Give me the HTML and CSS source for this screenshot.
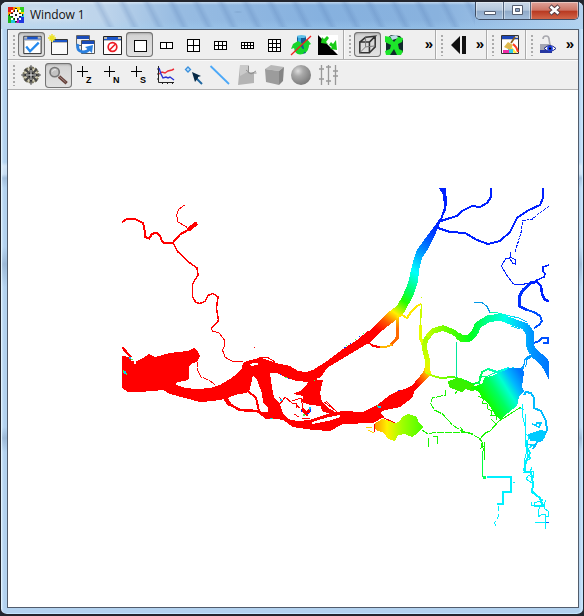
FILE: index.html
```html
<!DOCTYPE html>
<html lang="en">
<head>
<meta charset="utf-8">
<title>Window 1</title>
<link rel="stylesheet" href="styles.css">
</head>
<body>
<div class="window">
  <header class="titlebar">
    <svg class="app-icon" width="16" height="16" viewBox="0 0 16 16" shape-rendering="crispEdges">
      <path fill="#e81818" d="M0 0h8v8H0z"/><path fill="#f5d800" d="M8 0h8v8H8z"/><path fill="#18b818" d="M0 8h8v8H0z"/><path fill="#2038e0" d="M8 8h8v8H8z"/>
      <path fill="#ff9000" d="M5 0h3v4H5zM0 5h3v3H0z"/><path fill="#30d020" d="M12 0h4v5h-4z"/><path fill="#b020c0" d="M8 13h3v3H8z"/><path fill="#20c8e0" d="M3 13h4v3H3zM13 7h3v3h-3z"/>
      <path fill="#fff" d="M7 2h2v3h2V3h2v2h-2v2h3v2h-3v2h2v2h-2v-2H9v3H7v-3H5v2H3v-2h2V9H2V7h3V5H3V3h2v2h2z"/>
      <path fill="#222" d="M7 1h2v1H7zM6 3h1v2H6zM9 3h1v2H9zM7 14h2v1H7zM1 7h1v2H1zM14 7h1v2h-1zM3 6h2v1H3zM11 6h2v1h-2zM3 9h2v1H3zM11 9h2v1h-2zM6 11h1v2H6zM9 11h1v2H9zM7 7h2v2H7z"/>
    </svg>
    <span class="title">Window 1</span>
    <span class="smudges"></span>
    <div class="controls">
      <button class="ctl ctl-min"><svg width="27" height="18" viewBox="0 0 27 18"><path d="M8.500 9.500h11v3h-11z" fill="#fff" stroke="#555e70"/></svg></button>
      <button class="ctl ctl-max"><svg width="27" height="18" viewBox="0 0 27 18"><path d="M8.500 3.500h10v9h-10z" fill="#fff" stroke="#555e70"/><path d="M11.500 6.500h4v3h-4z" fill="#91a7c7" stroke="#555e70"/></svg></button>
      <button class="ctl ctl-close"><svg width="46" height="18" viewBox="0 0 46 18"><path d="M19 4l9 8M28 4l-9 8" stroke="#573f45" stroke-width="4.500"/><path d="M19.500 4.500l8 7M27.500 4.500l-8 7" stroke="#fff" stroke-width="2.600"/></svg></button>
    </div>
  </header>
  <main class="client">
    <div class="toolbar">
      <div class="group group-main">
        <i class="handle"></i>
        <button class="tool on"><svg viewBox="0 0 27 26"><path fill="#fff" stroke="#222" d="M5.500 4.500h18v18h-18z"/><path fill="#1b55c8" d="M6 5h17v3H6z"/><path fill="#bbb" d="M6 5h3v2H6zM20 5h3v2h-3zM6 8h17v1H6z"/><path d="M8 15l4 5 9-9" fill="none" stroke="#2489ee" stroke-width="2.400"/></svg></button>
        <button class="tool"><svg viewBox="0 0 27 26"><path fill="#fafafa" stroke="#333" d="M6.500 7.500h16v15h-16z"/><path fill="#1b55c8" d="M8 8h14v2H8z"/><path fill="#bbb" d="M7 10h15v1H7z"/><path d="M3 6h8M7 2v8M4.500 3.500l5 5M9.500 3.500l-5 5" stroke="#eee326" stroke-width="1.500"/></svg></button>
        <button class="tool"><svg viewBox="0 0 27 26"><path fill="#eee" stroke="#666" d="M4.500 3.500h13v10h-13z"/><path fill="#1b4cb8" d="M5 4h12v3H5z"/><path fill="#fff" stroke="#555" d="M9.500 8.500h13v13h-13z"/><path fill="#1b4cb8" d="M10 9h12v3H10z"/><path d="M6 12q-2 7 5 8 5 0 7-4" fill="none" stroke="#2b80df" stroke-width="3"/><path fill="#2b80df" d="M13 15l8-2-1 8z"/></svg></button>
        <button class="tool"><svg viewBox="0 0 27 26"><path fill="#fff" stroke="#222" d="M4.500 4.500h18v18h-18z"/><path fill="#1b55c8" d="M5 5h17v3H5z"/><path fill="#bbb" d="M5 5h3v2H5zM19 5h3v2h-3zM5 8h17v1H5z"/><circle cx="13.500" cy="15" r="4.300" fill="#fff" stroke="#ed1c24" stroke-width="1.700"/><path d="M10.500 18l6-6" stroke="#ed1c24" stroke-width="1.600"/></svg></button>
        <button class="tool on"><svg class="grid-icon" viewBox="0 0 27 26"><path d="M8.500 8.500h12v12h-12z"/></svg></button>
        <button class="tool"><svg class="grid-icon" viewBox="0 0 27 26"><path d="M7.500 10.500h12v6h-12zM13.500 10v7"/></svg></button>
        <button class="tool"><svg class="grid-icon" viewBox="0 0 27 26"><path d="M7.500 7.500h12v12h-12zM13.500 7v13M7 13.500h13"/></svg></button>
        <button class="tool"><svg class="grid-icon" viewBox="0 0 27 26"><path d="M7.500 9.500h12v8h-12zM11.500 9v9M15.500 9v9M7 13.500h13"/></svg></button>
        <button class="tool"><svg class="grid-icon" viewBox="0 0 27 26"><path d="M7.500 10.500h12v6h-12zM10.500 10v7M13.500 10v7M16.500 10v7M7 13.500h13"/></svg></button>
        <button class="tool"><svg class="grid-icon" viewBox="0 0 27 26"><path d="M7.500 7.500h12v12h-12zM11.500 7v13M15.500 7v13M7 11.500h13M7 15.500h13"/></svg></button>
        <button class="tool"><svg viewBox="0 0 27 26"><path fill="#125a94" d="M9 4h9v17q-5 2-9 0z"/><path fill="#32a8dc" d="M10 4h3v16h-3z"/><ellipse cx="13.500" cy="4.500" rx="4.500" ry="1.500" fill="#60c0e8"/><path fill="#15d52c" d="M5 12l5-3 5 3-2 2q1 4 5 3l-3 5q-8 2-9-6l-3 1zM15 12l4-5 4 5-2 1q0 5-4 8z"/><path d="M3 23L23 4" stroke="#f02020" stroke-width="1.300"/></svg></button>
        <button class="tool"><svg viewBox="0 0 27 26"><path fill="#fff" d="M3 3h20v20H3z"/><path d="M3 3l20 20H3z"/><path fill="#18cb16" d="M12 4l2 2-3 4 2 2-7-1 1-6 2 2zM21 8l1 10-7-1 2-2-3-2 2-3 2 2z"/></svg></button>
      </div>
      <div class="group group-view">
        <i class="handle"></i>
        <button class="tool on"><svg viewBox="0 0 27 26"><path d="M5.500 10.500h10v11h-10zM5.500 10.500l6-5 10-1-6 6M21.500 4.500v11l-6 6" fill="none" stroke="#333" stroke-width="1.600"/><path d="M11.500 5.500v10l10-1M11.500 15.500l-6 6" fill="none" stroke="#777"/></svg></button>
        <button class="tool"><svg viewBox="0 0 27 26"><path fill="#102a2c" d="M5 7l5-4 9 1 3 4v12l-4 3H8l-3-4z"/><path fill="#b9dbe5" d="M9 4l6-1 3 3-7 2z"/><path fill="#1de52a" d="M4 4l5 1 4 5 4-5 5 1-1 4-4 2 1 5 4 2-2 4h-4l-3-6-4 6H5l-1-4 5-2 1-4-6-3z"/></svg></button>
        <span class="more">»</span>
      </div>
      <div class="group group-step">
        <i class="handle"></i>
        <button class="tool"><svg viewBox="0 0 27 26"><path d="M5 13l9-9v18zM16 4h4v18h-4z" fill="#111"/></svg></button>
        <span class="more">»</span>
      </div>
      <div class="group group-clear">
        <i class="handle"></i>
        <button class="tool"><svg viewBox="0 0 27 26"><path fill="#fff" stroke="#333" d="M4.500 3.500h17v18h-17z"/><path fill="#1b45b8" d="M5 4h16v3H5z"/><path fill="#ccc" d="M5 7h16v1H5zM18 4h3v2h-3z"/><path fill="#ffe83a" d="M14 14l6 7h-3l-5-5z"/><path d="M16 12q4 3 5 8" fill="none" stroke="#ff3c22" stroke-width="2"/><path fill="#32cde7" d="M11 17h5v4h-5z"/><path fill="#f02ca7" d="M6 18h6v3H6z"/><path d="M18 5l-4 6" stroke="#8a5c19" stroke-width="1.700"/><path fill="#dfb94c" d="M11 10l5 3-3 5-6-3z"/></svg></button>
      </div>
      <div class="group group-lock">
        <i class="handle"></i>
        <button class="tool"><svg viewBox="0 0 27 26"><path d="M7 7q0-3 3-3t3 3l1 6" fill="none" stroke="#a8a8ae" stroke-width="1.600"/><path fill="#a4a6b2" d="M4 12h11v6H4z"/><path fill="#2637a0" d="M4 18h12v3H4z"/><path d="M8 16.500q6-6 12 0-6 5.500-12 0z" fill="#fff" stroke="#17248b"/><circle cx="14" cy="16.500" r="2.800" fill="#1739dc"/><circle cx="14" cy="16.500" r="1.100"/></svg></button>
        <span class="more">»</span>
      </div>
    </div>
    <div class="toolbar second">
      <div class="group group-tools">
        <i class="handle"></i>
        <button class="tool"><svg viewBox="0 0 27 26"><circle cx="13" cy="13" r="7.500" fill="#d8d2b8" stroke="#77745d" stroke-width="2" stroke-dasharray="2 1"/><path d="M7 7l12 12M19 7L7 19" stroke="#444" stroke-width="2"/><path d="M13 3l2 8 8 2-8 2-2 8-2-8-8-2 8-2z" fill="#222" stroke="#777" stroke-width=".6"/><path d="M13 8v10M8 13h10" stroke="#eee"/></svg></button>
        <button class="tool on"><svg viewBox="0 0 27 26"><path d="M14 14l8 7" stroke="#654039" stroke-width="3.500"/><path d="M13 13l8 7" stroke="#a18a87"/><circle cx="9.500" cy="9.500" r="4.800" fill="#c2c2c2" stroke="#777" stroke-width="1.700"/><path d="M7 9q1-3 4-2" fill="none" stroke="#eee"/></svg></button>
        <button class="tool"><svg class="axis" viewBox="0 0 27 26"><path d="M5 9.500h11M10.500 4v11"/><text x="14" y="21">Z</text></svg></button>
        <button class="tool"><svg class="axis" viewBox="0 0 27 26"><path d="M5 9.500h11M10.500 4v11"/><text x="14" y="21">N</text></svg></button>
        <button class="tool"><svg class="axis" viewBox="0 0 27 26"><path d="M5 9.500h11M10.500 4v11"/><text x="14" y="21">S</text></svg></button>
        <button class="tool"><svg viewBox="0 0 27 26"><path d="M5.500 4v16.500H21M4 7h2M4 12h2M4 17h2M9.500 20v2M14.500 20v2M19.500 20v2" stroke="#222" fill="none"/><path d="M6 12l3-2 3 1 3-2 4-1 2-1" fill="none" stroke="#ed2c37" stroke-width="1.400"/><path d="M6 6l2 6 2 4 3-1 2 1 2-1 4 3" fill="none" stroke="#2932d5" stroke-width="1.400"/></svg></button>
        <button class="tool"><svg viewBox="0 0 27 26"><path d="M8 5l2.500 2.500L8 10 5.500 7.500z" fill="#bde1ff" stroke="#3a90dc" stroke-width="1.300"/><path d="M15 15l7 7" stroke="#2067a0" stroke-width="2"/><path fill="#092a45" d="M12 10l9 4-3 1 0 1-3 4z"/></svg></button>
        <button class="tool"><svg viewBox="0 0 27 26"><path d="M3.500 4L22 22" stroke="#4ba8f8" stroke-width="1.800"/></svg></button>
        <button class="tool"><svg viewBox="0 0 27 26"><path fill="#b4b4b4" d="M6 3h9v8h5v10l-16 2z"/><path fill="#cacaca" d="M6 3h9v6l-9 5z"/><path d="M14.500 4v7h8M12 8l5 4 5-3" fill="none" stroke="#909090"/></svg></button>
        <button class="tool"><svg viewBox="0 0 27 26"><path fill="#b8b8b8" d="M4 7l6-4 13 2-5 4z"/><path fill="#9c9c9c" d="M4 7l14 2v14L5 20z"/><path fill="#858585" d="M18 9l5-4-1 14-4 4z"/></svg></button>
        <button class="tool"><svg viewBox="0 0 27 26"><defs><radialGradient id="ball" cx=".35" cy=".3" r=".75"><stop stop-color="#ddd"/><stop offset=".35" stop-color="#a9a9a9"/><stop offset="1" stop-color="#777"/></radialGradient></defs><circle cx="13" cy="13" r="10" fill="url(#ball)"/></svg></button>
        <button class="tool"><svg viewBox="0 0 27 26"><path d="M6.500 3v20M13.500 3v20M20.500 3v20M4 7h5M4 17h5M11 5h5M11 19h5M18 9h5M18 14h5" stroke="#999" stroke-width="1.300"/></svg></button>
      </div>
    </div>
    <section class="viewport">
      <svg class="map" width="570" height="517" viewBox="8 90 570 517" shape-rendering="crispEdges">
        <defs>
          <clipPath id="extent"><path d="M122 188h427v341H122z"/></clipPath>
          <linearGradient id="north" gradientUnits="userSpaceOnUse" x1="374" y1="328" x2="444" y2="228">
            <stop stop-color="#f00"/><stop offset=".1" stop-color="#ff5a00"/><stop offset=".2" stop-color="#fff000"/><stop offset=".32" stop-color="#2f0"/><stop offset=".42" stop-color="#00ff6a"/><stop offset=".57" stop-color="#0ff"/><stop offset=".75" stop-color="#008cff"/><stop offset=".9" stop-color="#0040ff"/><stop offset="1" stop-color="#0020ff"/>
          </linearGradient>
          <linearGradient id="east" gradientUnits="userSpaceOnUse" x1="420" y1="0" x2="549" y2="0">
            <stop stop-color="#f4ff00"/><stop offset=".1" stop-color="#a8ff00"/><stop offset=".27" stop-color="#4f0"/><stop offset=".4" stop-color="#00ff20"/><stop offset=".52" stop-color="#00ff90"/><stop offset=".66" stop-color="#00ffe8"/><stop offset=".78" stop-color="#00c0ff"/><stop offset=".87" stop-color="#0094ff"/><stop offset="1" stop-color="#0074ff"/>
          </linearGradient>
          <linearGradient id="arm" gradientUnits="userSpaceOnUse" x1="0" y1="374" x2="0" y2="330">
            <stop stop-color="#ffe400"/><stop offset=".3" stop-color="#d4ff00"/><stop offset="1" stop-color="#90ff00"/>
          </linearGradient>
          <linearGradient id="join" gradientUnits="userSpaceOnUse" x1="414" y1="382" x2="430" y2="370">
            <stop stop-color="#f00"/><stop offset=".5" stop-color="#ff7200"/><stop offset="1" stop-color="#ff0"/>
          </linearGradient>
          <linearGradient id="pond" gradientUnits="userSpaceOnUse" x1="372" y1="0" x2="422" y2="0">
            <stop stop-color="#ff8400"/><stop offset=".3" stop-color="#fff000"/><stop offset=".6" stop-color="#a0ff00"/><stop offset="1" stop-color="#50ff00"/>
          </linearGradient>
          <linearGradient id="lake" gradientUnits="userSpaceOnUse" x1="484" y1="397" x2="521" y2="374">
            <stop stop-color="#10ff00"/><stop offset=".3" stop-color="#00ff62"/><stop offset=".55" stop-color="#00ffd0"/><stop offset=".75" stop-color="#00b8ff"/><stop offset="1" stop-color="#0078ff"/>
          </linearGradient>
          <linearGradient id="creek" gradientUnits="userSpaceOnUse" x1="396" y1="348" x2="396" y2="316">
            <stop stop-color="#ff6a00"/><stop offset=".6" stop-color="#ff6a00"/><stop offset="1" stop-color="#ffe000"/>
          </linearGradient>
        </defs>
        <g clip-path="url(#extent)">

        <g class="line red">
          <path stroke-width="2" d="M122 222l5-3h8l8 4 2 9v5l4 1.500 3-4.500 5-1.500 3 3.500 2 5 3 2.500 8-1 7-8 8-4.500"/>
          <path stroke-width="4" d="M188 230l9-7"/>
          <path stroke-width="1" d="M185.500 204.500l-6.500 4.500-2.500 6 1.500 7 9.500 5.500"/>
          <path stroke-width="1.500" d="M173 243l5 9 12 11 7 5 1 7-5.500 9v13l3.500 5.500 4 1 5-2 3-6 5-2 5 3.500-1.500 11 2 12.500-7 8"/>
          <path stroke-width="1" d="M211.500 328.500l1 2.500 6.500 2 5.500 7 .5 5-2.500 5 2.500 7 6.500 4 11.500 1"/>
          <path stroke-width="1" stroke-dasharray="5 1" d="M197 362v7l4 8 8 3 6 5"/>
          <path stroke-width="2.500" d="M122 347l6 7 6 6"/>
          <path stroke-width="4" d="M225 398l5 7"/>
          <path stroke-width="2.500" d="M229 404l11 6 17 1 14 6"/>
          <path stroke-width="2" d="M248 391l8 7 3 13M249 384v6"/>
          <path stroke-width="1" d="M256 360l5-3 6 0 8 5M254.500 347v1"/>
        </g>

        <path class="red-fill" d="M122 356L129 357 135 362 143 358 149 354 155 357 170 353 177 352 188 351 194 348 197 350 200 356 197 362 192 363 189 367 189 379 185 381 177 382 176 385 185 388 197 389 210 388 220 385 230 379 238 373 242 368 243 363 250 360 262 358 270 361 280 364 290 366 298 371 306 372 313 370 327 361 343 349 357 340 368 331 384 329 370 342 357 350 340 360 327 368 321 377 313 380 308 382 297 381 287 378 277 373 270 373 272 388 274 397 280 404 283 413 288 419 297 421 310 420 330 413 343 411 363 412 377 405 390 395 398 391 407 388 413 385 418 378 424 381 415 390 412 398 400 407 385 410 380 413 384 417 373 423 343 424 330 431 313 430 293 427 283 420 276 419 266 419 258 413 268 412 268 408 263 402 262 393 257 380 253 375 251 385 247 393 238 394 225 399 213 401 200 402 185 398 170 394 163 390 153 391 138 392 128 392 122 388z"/>
        <path class="red-fill" d="M293 394L300 391 307 384 311 379 323 380 320 393 322 402 330 409 337 413 327 413 322 411 321 406 310 405 302 402 303 396z"/>
        <g class="gap">
          <path d="M250 364l3-1h5v2l-7 1zM130 357h3l3 3v4h-2v-3h-3zM312 422L329 417 340 415 340 417 328 421 312 424z"/>
        </g>
        <g class="line red">
          <path stroke-width="1" d="M279 397l4 4-3 3 5-7 7 6 5 0-1 5M292 401l9-3 2 10M294 414l5 3M302 418h8M324 402l11 8M326 401l12 12M296 405l4 3"/>
          <path stroke-width="3" d="M302 409l5 5 3-5"/>
        </g>
        <g class="specks">
          <path fill="#00c8ff" d="M129 357h2v2h-2zM124 371h2v3h-2zM280 399h2v2h-2zM309 407h2v3h-2zM378 406h3v2h-3zM270 418h2v1h-2z"/>
          <path fill="#30ff50" d="M131 359h2v1h-2zM123 370h1v3h-1zM126 373h1v2h-1zM303 414h2v2h-2zM377 405h1v2h-1zM272 418h1v1h-1zM346 345h1v1h-1zM355 339h1v1h-1zM363 333h1v1h-1zM285 377h2v1h-2zM314 380h1v1h-1z"/>
          <path fill="#0030ff" d="M301 410h1v2h-1zM310 409h1v3h-1zM307 413h2v1h-2zM344 347h2v1h-2zM350 343h1v1h-1zM359 336h1v1h-1zM288 378h1v1h-1zM280 374h1v1h-1zM398 390h2v1h-2zM378 323h1v1h-1z"/>
        </g>

        <path fill="url(#north)" d="M368 332L387 313 397 306 403 295 408 283 413 262 417 250 424 240 433 228 441 217 444 207 443 195 439 188 446 188 447 203 446 210 440 223 435 235 428 249 422 258 419 270 418 282 413 296 405 311 397 319 383 330z"/>
        <path fill="url(#join)" d="M412 386L417 380 423 372 425 367 430 367 431 374 424 381 415 390z"/>

        <g class="line blue">
          <path stroke-width="2" d="M441 221l9-3 7-2 5-5 10-5 8 1 7-4 4-6v-9"/>
          <path stroke-width="2" d="M438 228l12 4 15 1 12 7 11 4 12-3 10-9 7-14 10-7 13-6 3-7v-10"/>
          <path stroke-width="1" stroke-dasharray="3 1" d="M549 206.500l-9 6-8 7-9 1-2 12-3 10-3 9"/>
          <path stroke-width="1" d="M510.500 252v5l5 3v4l-3-1-3-5-4 1-4 7 5 9 7 9 7 1 8-2"/>
          <path stroke-width="1.500" d="M549 265l-6 2v4l2 3-1 3-7 3-7 4"/>
          <path stroke-width="3" stroke="#0030ff" d="M532 282l-9 8-4 7v9l8 4"/>
          <path stroke-width="2" stroke="#0050ff" d="M527 310l7 2 6 4 2 5-3 4-5 3"/>
          <path stroke-width="2.500" d="M530 283l7-1 4 4 1 8 3 6 4 1"/>
        </g>

        <path class="line" stroke="url(#creek)" stroke-width="3" d="M397 316v22l-6 7"/>
        <path class="line" stroke="#ffb500" stroke-width="2" d="M392 345l-7 2-6 0"/>
        <path class="line" stroke="#f00" stroke-width="2" d="M380 347l-7-1-5-4"/>
        <path class="line" stroke="#ffe900" stroke-width="2" d="M397 317l5-2 5 3 4-6 6-6 4-2"/>
        <path class="line" stroke="#c9ff00" stroke-width="1.500" d="M421.500 304l-1 19-1 14M421.500 297v1"/>
        <path class="line" stroke="#e8ff00" stroke-width="3" d="M420 325l0 12 4 10"/>
        <g class="line band">
          <path stroke="url(#arm)" stroke-width="5" d="M427 373L428 362 424 347 426 339 433 331"/>
          <g stroke="url(#east)">
            <path stroke-width="5.500" d="M427 337L433 331 443 328 453 332 460 337"/>
            <path stroke-width="7" d="M458 336L463 339 470 338 475 332 478 325 488 319 500 317 513 322 527 327"/>
            <path stroke-width="8" d="M526 327L530 333 530 345 533 353"/>
            <path stroke-width="9" d="M533 352L543 361 547 366 553 378"/>
          </g>
        </g>
        <g class="line" stroke="url(#east)">
          <path stroke-width="2" d="M425 372l8 4 8 2 12-1 10 3 9 4 7-1 3-11 6-3 9 3 12-4"/>
          <path stroke-width="1" d="M470 389l9-3 1-10 8 0 11-5 8 0 7-4M482 319l7-4M490 312l8 1 12 3 9 2 8 4M511 326l9 3"/>
          <path stroke-width="1" d="M474 302l8 .5 5 4 3 6" stroke="#0098e8"/>
          <path stroke-width="1" d="M456.500 378v-36" stroke="#00e89a"/>
        </g>
        <path fill="#38f000" d="M448 381L458 378 465 381 472 384 479 389 472 391 465 389 462 392 458 391 449 387z"/>
        <path fill="url(#lake)" d="M470 388L478 385 482 384 485 377 492 376 500 372 506 370 508 368 522 368 524 372 522 387 524 391 519 397 517 406 508 413 500 420 494 413 489 405 482 398 479 392z"/>
        <path class="line" stroke="#18f500" stroke-width="1" d="M478 396l6 3-2 4 5 1 1 5 4 2-1 4 5 0 1 5"/>

        <g class="line cyan">
          <path stroke-width="3" stroke="#009cff" d="M531 356l-5 3-1 6-3 4"/>
          <path stroke-width="1" stroke="#fff" d="M526 360l-2 10"/>
          <path stroke-width="2" stroke="#0050ff" d="M534 343l5-2 3-3 6 0v5h-5"/>
          <path stroke-width="2" stroke="#00baff" d="M524 395l2-3 5 1 3 5v10l7 3 5 10 1 9-5 10-5 2-4 7"/>
          <path stroke-width="1" d="M522 404v10l3 12v18M525 444l2 6-2 8-1 14 6 0 2-5"/>
          <path stroke-width="1" d="M520 408l4 2M525 414v20l4 2-2 8 7 1-7 4v6l4 3-4 3-2 6 0 4 9 1-1 6-4-3-3 4 6 4v6l4 7 7 4-9 3v3h9l3-6"/>
          <path stroke-width="2" d="M526 440l1 8 3 5-4 8-2 10M531 472l2 12-1 8 8 6 3 9"/>
          <path stroke-width="1" d="M531 502v3h9M541 505l-3 6 0 6 5-3 5 3 1-5-5-4 0 -6M545 514v15M535 522h10"/>
          <path stroke="#0060ff" d="M546 522h3"/>
          <path stroke="#00caff" stroke-width="1.500" d="M532 424l7 3 2-4-4 0-2 3M534 446l-7-2M545 436l-9 6"/>
        </g>
        <path fill="#00caff" d="M528 434l7-2 5-2 5 1v7l-6 3h-9z"/>
        <g class="line green">
          <path stroke-width="1" stroke-dasharray="7 1" d="M457 391l-2 3M445.500 390v5l-13 3-2 5 4 7 8 4 10 11 9 6 10 3 7 4M422 430l6 4 8-2 30 0 7 2"/>
          <path stroke-width="1" d="M428.500 438v9M437.500 436v8M433 436h4M460.500 427l3 5"/>
          <path stroke-width="1" d="M480 439l5-6 5-2 9-10 8-5 14-9M497 425l-6-6M482 436l7-5"/>
          <path stroke-width="1" d="M478 437l5 6-2 5 3-2v14M485 442l-1 9-3-8"/>
          <path stroke-width="1.500" d="M482.500 451v26" stroke="#00ff3e"/>
        </g>
        <g class="line cyan">
          <path stroke-width="2" d="M487 477h24v15h-8v12h-6"/>
          <path stroke-width="1" stroke-dasharray="5 3" d="M498.500 506v10l-4 7 3 5M513 482h2"/>
        </g>
        <path fill="#00ff5a" d="M483 476h3v3h-3z"/>

        <path fill="url(#pond)" d="M374 424L382 419 388 420 396 423 400 421 402 417 408 414 417 417 419 423 423 427 418 433 412 437 405 434 398 435 395 441 388 439 384 433 376 430z"/>
        <path class="line" stroke="#f00" stroke-width="1" d="M382 417l13 6M374.500 424v8"/>
        <path class="line" stroke="#ffd000" stroke-width="1" d="M366 427l6 1M368 430l6 3"/>
        </g>
      </svg>
    </section>
  </main>
</div>
</body>
</html>
```
FILE: styles.css
```css
* { box-sizing: border-box; }

body {
  margin: 0;
  background: #222731;
  overflow: hidden;
  font-family: "Open Sans", "Noto Sans", sans-serif;
}

.window {
  width: 584px;
  height: 616px;
  display: flex;
  flex-direction: column;
  padding: 0 4px 6px 6px;
  border: 1px solid #23252d;
  border-width: 2px 1px 2px;
  border-radius: 7px;
  background:
    linear-gradient(#fff0 160px, #ffffff66 164px, #ffffff44 172px, #6c86a844 176px, #fff0 186px, #fff0 245px, #6c86a855 262px, #fff0 285px, #fff0 425px, #6c86a855 436px, #fff0 450px),
    linear-gradient(90deg, #d8ecff 0, #b3d2ef 3px, #b3d2ef 578px, #d0eaff 582px);
  box-shadow: inset 1px 1px #e1f3ff, inset -1px -1px #c5e5fd;
}

.titlebar {
  height: 27px;
  flex: none;
  margin: 0 -4px 0 -6px;
  padding-left: 7px;
  display: flex;
  align-items: flex-start;
  border-radius: 6px 6px 0 0;
  background:
    linear-gradient(#fff7 0, #fff0 3px, #fff0 18px, #a6d4f455 27px),
    linear-gradient(90deg, #c7dbec 0, #bdd4eb 18%, #98bce2 30%, #86b1df 55%, #89b2de 75%, #b4d2ef 100%);
}

.app-icon { margin-top: 5px; }

.title {
  margin: 4px 0 0 6px;
  width: 61px;
  color: #111;
  font-size: 12px;
  line-height: 18px;
  letter-spacing: -.1px;
  white-space: nowrap;
  text-shadow: 0 0 6px #fff;
}

.smudges {
  flex: 1;
  height: 25px;
  background:
    radial-gradient(ellipse at 46px 13px, #50688a 0, #50688a00 10px),
    radial-gradient(ellipse at 126px 10px, #43658e 0, #43658e00 8px),
    radial-gradient(ellipse at 147px 10px, #43658e 0, #43658e00 9px),
    repeating-linear-gradient(63deg, #5278b000 0, #5278b000 12px, #5278b03a 17px, #5278b000 22px);
}

.controls {
  display: flex;
  width: 104px;
  height: 18px;
  flex: none;
  margin-right: 4px;
  border: 1px solid #3d4c63;
  border-top: 0;
  border-radius: 0 0 5px 5px;
  overflow: hidden;
}

.ctl {
  padding: 0;
  height: 18px;
  border: 0;
  border-right: 1px solid #53657d;
  box-shadow: inset 0 0 0 1px #ffffff66;
  background: linear-gradient(#cbd9e8 0, #b4c7dc 46%, #8fa9c8 50%, #a7c2df 100%);
}
.ctl svg { display: block; }
.ctl-min { width: 28px; }
.ctl-max { width: 27px; }
.ctl-close {
  flex: 1;
  border-right: 0;
  background: linear-gradient(#dfa39a 0, #cc7464 46%, #b83820 50%, #d46b4e 100%);
}

.client {
  width: 572px;
  height: 579px;
  flex: none;
  display: flex;
  flex-direction: column;
  border: 1px solid #515c6c;
  background: #fff;
}

.toolbar {
  height: 30px;
  flex: none;
  display: flex;
  background: #efefef;
  border-bottom: 1px solid #b3b3b3;
}
.toolbar.second { border-top: 1px solid #fafafa; }

.group {
  display: flex;
  align-items: center;
  border-right: 1px solid #aaa;
  border-left: 1px solid #fafafa;
}
.group-main { width: 336px; }
.group-view { width: 92px; }
.group-step { width: 51px; }
.group-clear { width: 39px; }
.group-lock, .group-tools { flex: 1; border-right: 0; }

.handle {
  width: 9px;
  height: 22px;
  flex: none;
  background: radial-gradient(circle at 5px 2px, #aaa 0, #aaa 1px, #aaa0 1.500px) 0 0 / 9px 4px;
}

.tool {
  width: 27px;
  height: 26px;
  flex: none;
  padding: 0;
  border: 0;
  background: none;
}
.tool svg { display: block; width: 27px; height: 26px; }
.tool.on {
  height: 25px;
  border-radius: 4px;
  background: linear-gradient(#d2d2d2, #e2e2e2);
  box-shadow: inset 0 0 0 1px #747474, inset 0 2px 2px #aaa;
}
.tool.on svg { height: 25px; }

.grid-icon path { fill: #fff; stroke: #000; shape-rendering: crispEdges; }
.axis path { fill: none; stroke: #000; shape-rendering: crispEdges; }
.axis text { font: bold 9px "Liberation Sans", sans-serif; }

.more {
  flex: 1;
  align-self: center;
  text-align: right;
  padding-right: 2px;
  font: bold 15px/20px "Liberation Sans", sans-serif;
  margin-top: -1px;
}
.group-lock .more { padding-right: 4px; }

.viewport { flex: 1; overflow: hidden; background: #fff; }
.map { display: block; }

.line { fill: none; }
.band { stroke-linejoin: round; }
.red { stroke: #f00; }
.red-fill { fill: #f00; }
.gap { fill: #fff; }
.blue { stroke: #0020ff; }
.cyan { stroke: #00f0ff; }
.green { stroke: #18f500; }
```
